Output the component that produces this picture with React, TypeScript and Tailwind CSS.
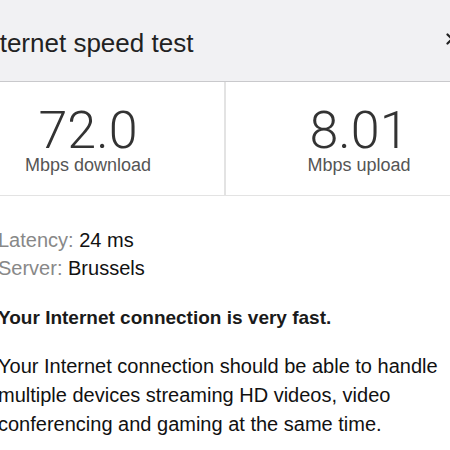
import { X } from 'lucide-react'

const SANS = "font-['Liberation_Sans',Arial,sans-serif]"

function Stat({ value, label, className }: { value: string; label: string; className: string }) {
  return (
    <div className={`flex flex-col items-center pt-[25px] pb-[20px] ${className}`}>
      <div className="font-['Roboto',sans-serif] text-[52px] font-light leading-[48px] text-[#333]">{value}</div>
      <div className={`${SANS} text-[18px] leading-[20px] text-[#555]`}>{label}</div>
    </div>
  )
}

export default function App() {
  return (
    <div className="h-[450px] w-[450px] overflow-hidden bg-white">
      <div className={`-ml-[48px] w-[540px] ${SANS}`}>
        {/* Header */}
        <div className="flex h-[82px] items-start justify-between border-b border-[#c9c9cc] bg-[#f1f1f3] pl-[26px] pr-[31px] pt-[28px]">
          <div className="text-[26px] leading-[30px] text-[#222]">Internet speed test</div>
          <X className="mt-[2px] h-[18px] w-[18px] text-[#222]" strokeWidth={3} />
        </div>

        {/* Results */}
        <div className="flex border-b border-[#e3e3e3]">
          <Stat value="72.0" label="Mbps download" className="w-[272px]" />
          <div className="w-[2px] bg-[#e3e3e3]" />
          <Stat value="8.01" label="Mbps upload" className="flex-1" />
        </div>

        {/* Details */}
        <div className="w-[502px] pl-[46px] pt-[30px] text-[#111]">
          <div className="text-[20px] leading-[28px]">
            <span className="text-[#888]">Latency:</span> 24 ms
          </div>
          <div className="text-[20px] leading-[28px]">
            <span className="text-[#888]">Server:</span> Brussels
          </div>
          <div className="mt-[24px] text-[19px] font-bold leading-[24px] text-[#1a1a1a]">Your Internet connection is very fast.</div>
          <p className="mt-[22px] text-[20px] leading-[29px]">
            Your Internet connection should be able to handle multiple devices streaming HD videos, video conferencing and gaming at the same time.
          </p>
        </div>
      </div>
    </div>
  )
}
